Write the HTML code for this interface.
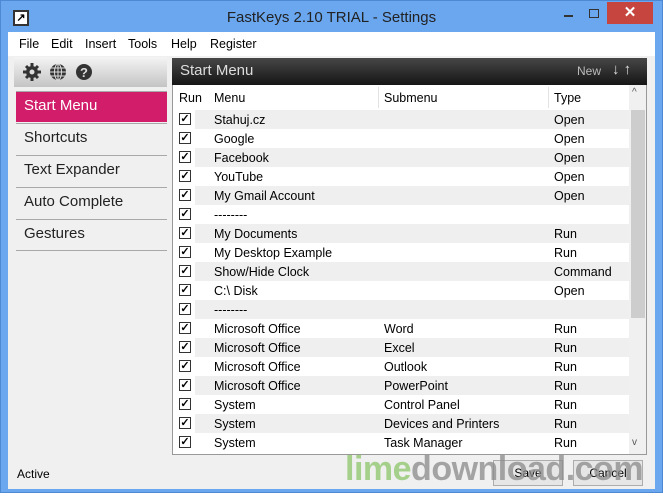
<!DOCTYPE html>
<html><head><meta charset="utf-8"><style>
*{margin:0;padding:0;box-sizing:border-box}
body{width:663px;height:497px;background:#fff;font-family:"Liberation Sans",sans-serif;position:relative;overflow:hidden;font-size:12px;color:#000}
.win{position:absolute;left:0;top:0;width:663px;height:493px;background:#6aa7ef;border:1px solid #4c88d4}
.title{position:absolute;left:0;top:9px;width:663px;text-align:center;font-size:15px;color:#222}
.appicon{position:absolute;left:13px;top:10px;width:16px;height:16px;border:2px solid #333;background:#fff;font-size:11px;line-height:12px;text-align:center;font-weight:bold}
.close{position:absolute;left:607px;top:2px;width:46px;height:22px;background:#c7453f;color:#fff;text-align:center;font-size:15px;line-height:22px;font-weight:bold}
.client{position:absolute;left:8px;top:32px;width:647px;height:457px;background:#f0f0f0}
.menubar{position:absolute;left:8px;top:32px;width:647px;height:24px;background:#fff}
.menubar span{position:absolute;top:5px;font-size:12.5px}
.iconbar{position:absolute;left:14px;top:57px;width:153px;height:30px;background:linear-gradient(#f4f4f4,#c4c4c4)}
.side{position:absolute;left:16px;width:151px;height:31px;font-size:15px;padding:5px 0 0 8px;color:#222;border-top:1px solid #a8a8a8}
.sel{background:#d11d6a;color:#fff}
.hdr{position:absolute;left:172px;top:58px;width:475px;height:27px;background:linear-gradient(#474747,#151515);color:#ddd;font-size:15px}
.tbl{position:absolute;left:172px;top:85px;width:475px;height:370px;background:#fff;border:1px solid #999;border-top:none;overflow:hidden}
.row{position:absolute;left:0;width:456px;height:19px;font-size:12.5px}
.row span{position:absolute;top:3px}
.g{background:linear-gradient(to right,#fff 22px,#efefef 22px)}
.cb{position:absolute;left:6px;top:3px;width:12px;height:12px;border:1px solid #333;background:#fff;font-size:11px;line-height:10px;text-align:center;font-weight:bold}
.th{position:absolute;top:6px;font-size:12.5px}
.btn{position:absolute;top:460px;height:26px;width:70px;border:1px solid #adadad;background:#e6e6e6;text-align:center;font-size:12px;line-height:24px}
.wm{position:absolute;left:345px;top:450px;font-size:34px;font-weight:bold;letter-spacing:-0.5px;opacity:.75;white-space:nowrap;width:312px;overflow:hidden}
</style></head><body>
<div class="win"></div>
<div class="appicon">↗</div>
<div class="title">FastKeys 2.10 TRIAL - Settings</div>
<div style="position:absolute;left:564px;top:15px;width:9px;height:2px;background:#333"></div>
<div style="position:absolute;left:589px;top:9px;width:10px;height:9px;border:1px solid #333"></div>
<div class="close">✕</div>
<div class="client"></div>
<div class="menubar"><span style="left:11px">File</span><span style="left:43px">Edit</span><span style="left:77px">Insert</span><span style="left:120px">Tools</span><span style="left:163px">Help</span><span style="left:202px">Register</span></div>
<div class="iconbar"><svg width="153" height="30"><g fill="#333"><circle cx="18" cy="15" r="6"/><g stroke="#333" stroke-width="3"><line x1="18" y1="6" x2="18" y2="24"/><line x1="9" y1="15" x2="27" y2="15"/><line x1="12" y1="9" x2="24" y2="21"/><line x1="24" y1="9" x2="12" y2="21"/></g><circle cx="18" cy="15" r="2.5" fill="#ddd"/><circle cx="44" cy="15" r="8"/><circle cx="70" cy="15" r="8"/></g><g stroke="#ddd" stroke-width="1" fill="none"><ellipse cx="44" cy="15" rx="3.5" ry="8"/><line x1="36" y1="15" x2="52" y2="15"/><line x1="44" y1="7" x2="44" y2="23"/><line x1="37" y1="11" x2="51" y2="11"/><line x1="37" y1="19" x2="51" y2="19"/></g><text x="70" y="20" font-size="13" font-weight="bold" fill="#ddd" text-anchor="middle" font-family="Liberation Sans">?</text></svg></div>
<div class="side sel" style="top:91px">Start Menu</div>
<div class="side" style="top:123px">Shortcuts</div>
<div class="side" style="top:155px">Text Expander</div>
<div class="side" style="top:187px">Auto Complete</div>
<div class="side" style="top:219px">Gestures</div>
<div style="position:absolute;left:16px;top:250px;width:151px;border-top:1px solid #a8a8a8"></div>
<div class="hdr"><span style="position:absolute;left:8px;top:4px">Start Menu</span><span style="position:absolute;left:405px;top:6px;font-size:12px;color:#bbb">New</span><span style="position:absolute;left:440px;top:3px;font-size:15px;font-weight:bold">↓ ↑</span></div>
<div class="tbl">
<div class="th" style="left:6px">Run</div><div class="th" style="left:41px">Menu</div><div class="th" style="left:211px">Submenu</div><div class="th" style="left:381px">Type</div>
<div style="position:absolute;left:205px;top:2px;height:21px;border-left:1px solid #e2e2e2"></div>
<div style="position:absolute;left:375px;top:2px;height:21px;border-left:1px solid #e2e2e2"></div>
<div style="position:absolute;left:456px;top:0;width:18px;height:370px;background:#f0f0f0"></div>
<div style="position:absolute;left:458px;top:25px;width:14px;height:208px;background:#cdcdcd"></div>
<div style="position:absolute;left:459px;top:2px;font-size:10px;color:#555">^</div>
<div style="position:absolute;left:459px;top:352px;font-size:10px;color:#555">v</div>
<div id="rows"></div>
</div>
<div style="position:absolute;left:17px;top:467px;font-size:12px">Active</div>
<div class="btn" style="left:493px">Save</div>
<div class="btn" style="left:573px">Cancel</div>
<div class="wm"><span style="color:#8cc66a">lime</span><span style="color:#8a8a8a">download.com</span></div>
<script>
var d=[["Stahuj.cz","","Open"],["Google","","Open"],["Facebook","","Open"],["YouTube","","Open"],["My Gmail Account","","Open"],["--------","",""],["My Documents","","Run"],["My Desktop Example","","Run"],["Show/Hide Clock","","Command"],["C:\\ Disk","","Open"],["--------","",""],["Microsoft Office","Word","Run"],["Microsoft Office","Excel","Run"],["Microsoft Office","Outlook","Run"],["Microsoft Office","PowerPoint","Run"],["System","Control Panel","Run"],["System","Devices and Printers","Run"],["System","Task Manager","Run"]];
var h="";d.forEach(function(r,i){h+='<div class="row'+(i%2==0?' g':'')+'" style="top:'+(25+i*19)+'px"><div class="cb">✓</div><span style="left:41px">'+r[0]+'</span><span style="left:211px">'+r[1]+'</span><span style="left:381px">'+r[2]+'</span></div>'});
document.getElementById("rows").innerHTML=h;
</script>
</body></html>
